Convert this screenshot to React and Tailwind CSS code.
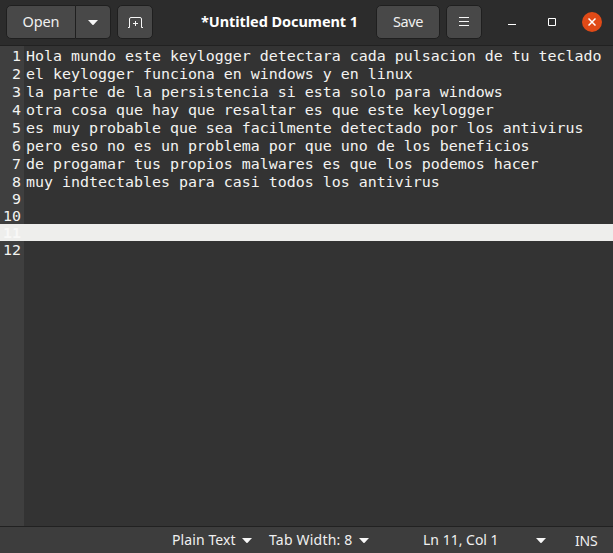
import React from "react";

const lines = [
  "Hola mundo este keylogger detectara cada pulsacion de tu teclado",
  "el keylogger funciona en windows y en linux",
  "la parte de la persistencia si esta solo para windows",
  "otra cosa que hay que resaltar es que este keylogger",
  "es muy probable que sea facilmente detectado por los antivirus",
  "pero eso no es un problema por que uno de los beneficios",
  "de progamar tus propios malwares es que los podemos hacer",
  "muy indtectables para casi todos los antivirus",
  "",
  "",
  "",
  "",
];
const CURRENT = 10;

function Caret({ className = "" }) {
  return (
    <svg width="10" height="5" viewBox="0 0 10 5" className={`shrink-0 ${className}`}>
      <path d="M0 0H10L5.6 4.7Q5 5.2 4.4 4.7Z" fill="#f7f7f7" />
    </svg>
  );
}

const button =
  "flex h-[34px] shrink-0 items-center justify-center border border-[#1f1f1f] bg-[#484848] text-[#f0f0f0]";

function Header() {
  return (
    <header className="flex h-[46px] shrink-0 items-start border-b border-[#212121] bg-[#2c2c2c] pl-[6px] pt-[5px]">
      <button className={`${button} w-[70px] rounded-l-[5px]`}>
        <span className="text-[14.5px] tracking-[-0.1px]">Open</span>
      </button>
      <button className={`${button} w-[35px] rounded-r-[5px] border-l-0`}>
        <Caret />
      </button>
      <button className={`${button} ml-[6px] w-[36px] rounded-[5px]`}>
        <svg width="16" height="16" viewBox="0 0 16 16" fill="none" stroke="#f7f7f7">
          <path d="M1 13.5H2.5V5Q2.5 3.5 4 3.5H13Q14.5 3.5 14.5 5V13.5H16" />
          <path d="M6 9.5H11M8.5 7V12" />
        </svg>
      </button>
      <h1 className="ml-[48px] w-[175px] whitespace-nowrap text-[14.5px] font-bold leading-[33px] tracking-[-0.06px] text-white">
        *Untitled Document 1
      </h1>
      <button className={`${button} w-[64px] rounded-[5px]`}>
        <span className="text-[14.5px] tracking-[-0.4px]">Save</span>
      </button>
      <button className={`${button} ml-[6px] w-[36px] rounded-[5px]`}>
        <svg width="10" height="10" viewBox="0 0 10 10" fill="none" stroke="#f7f7f7">
          <path d="M0 .5H10M0 4.5H10M0 8.5H10" />
        </svg>
      </button>
      <div className="ml-[26px] flex h-[34px] items-center">
        <svg width="8" height="8" viewBox="0 0 8 8" className="shrink-0">
          <path d="M0 6H8V7H0Z" fill="#fff" />
        </svg>
        <svg width="8" height="8" viewBox="0 0 8 8" className="ml-[32px] shrink-0">
          <path d="M.5 .5H7.5V7.5H.5Z" fill="none" stroke="#fff" />
        </svg>
        <div className="ml-[26px] flex size-5 items-center justify-center rounded-full bg-[#e04a17]">
          <svg width="8" height="8" viewBox="0 0 8 8">
            <path d="M.5 .5L7.5 7.5M7.5 .5L.5 7.5" stroke="#fff" strokeWidth="1.5" />
          </svg>
        </div>
      </div>
    </header>
  );
}

function Line({ text, index }) {
  const current = index === CURRENT;
  const height = index < 8 ? "h-[18px] leading-[20px]" : "h-[17px] leading-[18px]";
  return (
    <div className={`flex shrink-0 ${height} ${current ? "bg-[#eeeeec]" : ""}`}>
      <span className={`w-[21px] shrink-0 text-right ${current ? "font-bold text-[#f8f8f7]" : "text-[#f3f3f1]"}`}>
        {index + 1}
      </span>
      <span className="ml-[5px] whitespace-pre text-[#f3f3f1]">{text}</span>
    </div>
  );
}

export default function App() {
  return (
    <div className="flex h-[553px] w-[613px] flex-col overflow-hidden bg-[#333333] font-['Noto_Sans','Open_Sans',sans-serif]">
      <Header />
      <main className="flex min-h-0 flex-1 flex-col bg-[linear-gradient(to_right,#3f3f3f_24px,#333333_24px)] font-['DejaVu_Sans_Mono',monospace] text-[14.95px]">
        {lines.map((text, index) => (
          <Line key={index} text={text} index={index} />
        ))}
      </main>
      <footer className="flex h-[27px] shrink-0 items-center whitespace-nowrap border-t border-[#212121] bg-[#3d3d3d] text-[14px] text-[#f0f0f0]">
        <span className="mb-[2px] ml-[172px] w-[70px] tracking-[0.1px]">Plain Text</span>
        <Caret />
        <span className="mb-[2px] ml-[17px] w-[90px] tracking-[0.2px]">Tab Width: 8</span>
        <Caret />
        <span className="mb-[2px] ml-[54px] w-[113px]">Ln 11, Col 1</span>
        <Caret />
        <span className="ml-[29px] tracking-[-0.2px]">INS</span>
      </footer>
    </div>
  );
}
